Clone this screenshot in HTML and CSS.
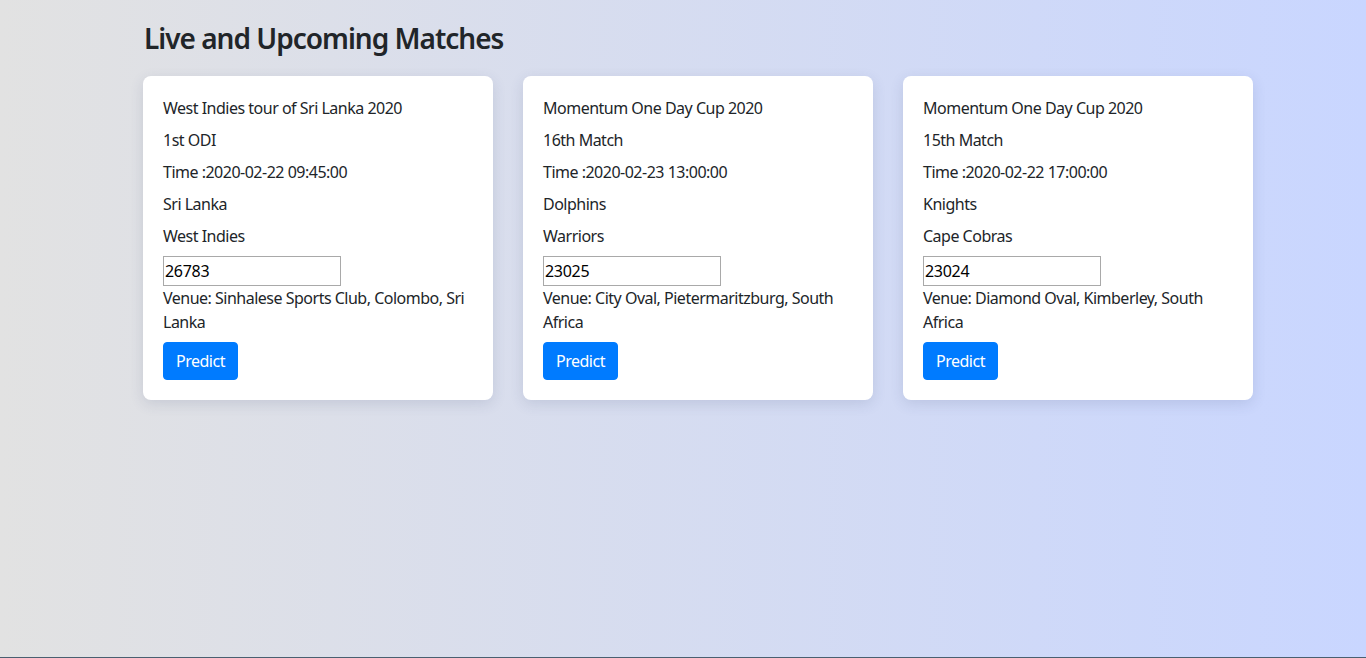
FILE: index.html
```html
<!DOCTYPE html>
<html lang="en">
<head>
<meta charset="utf-8">
<title>Live and Upcoming Matches</title>
<link rel="stylesheet" href="styles.css">
</head>
<body>
<div class="page">
  <div class="container">
    <h3 class="title">Live and Upcoming Matches</h3>
    <div class="cards">
      <div class="card">
        <p>West Indies tour of Sri Lanka 2020</p>
        <p>1st ODI</p>
        <p>Time :2020-02-22 09:45:00</p>
        <p>Sri Lanka</p>
        <p>West Indies</p>
        <input class="field" type="text" value="26783">
        <div class="venue">Venue: Sinhalese Sports Club, Colombo, Sri Lanka</div>
        <button class="btn">Predict</button>
      </div>
      <div class="card">
        <p>Momentum One Day Cup 2020</p>
        <p>16th Match</p>
        <p>Time :2020-02-23 13:00:00</p>
        <p>Dolphins</p>
        <p>Warriors</p>
        <input class="field" type="text" value="23025">
        <div class="venue">Venue: City Oval, Pietermaritzburg, South Africa</div>
        <button class="btn">Predict</button>
      </div>
      <div class="card">
        <p>Momentum One Day Cup 2020</p>
        <p>15th Match</p>
        <p>Time :2020-02-22 17:00:00</p>
        <p>Knights</p>
        <p>Cape Cobras</p>
        <input class="field" type="text" value="23024">
        <div class="venue">Venue: Diamond Oval, Kimberley, South Africa</div>
        <button class="btn">Predict</button>
      </div>
    </div>
  </div>
</div>
</body>
</html>
```

FILE: styles.css
```css
html, body {
  margin: 0;
  padding: 0;
  height: 100%;
}

body {
  font-family: "Noto Sans", "Open Sans", sans-serif;
  font-size: 16px;
  line-height: 1.5;
  letter-spacing: -0.5px;
  color: #212529;
}

.page {
  box-sizing: border-box;
  min-height: 658px;
  height: 100%;
  background: linear-gradient(to right, #e2e2e2, #c9d6ff);
  border-bottom: 1px solid #4a5f70;
}

.container {
  box-sizing: border-box;
  max-width: 1140px;
  margin: 0 auto;
  padding: 21px 0 0 30px;
}

.title {
  margin: 0 0 21px 1px;
  font-size: 28px;
  font-weight: 600;
  line-height: 34px;
  letter-spacing: -1px;
}

.cards {
  display: grid;
  grid-template-columns: repeat(3, 350px);
  gap: 30px;
}

.card {
  background: #fff;
  border-radius: 8px;
  padding: 20px;
  box-shadow: 0 4px 14px rgba(60, 70, 110, 0.14);
}

.card p {
  margin: 0 0 8px;
}

.field {
  display: block;
  box-sizing: border-box;
  width: 178px;
  height: 30px;
  margin: 0;
  padding: 1px 1px;
  border: 1px solid #a9a9a9;
  font-family: inherit;
  font-size: 16px;
  letter-spacing: -0.3px;
  color: #000;
  background: #fff;
}

.venue {
  margin: 0 0 8px;
}

.btn {
  display: inline-block;
  height: 38px;
  padding: 0 12px;
  border: 1px solid #007bff;
  border-radius: 4px;
  background: #007bff;
  color: #fff;
  font-family: inherit;
  font-size: 16px;
  line-height: 1.5;
  letter-spacing: -0.5px;
  cursor: pointer;
}
```
